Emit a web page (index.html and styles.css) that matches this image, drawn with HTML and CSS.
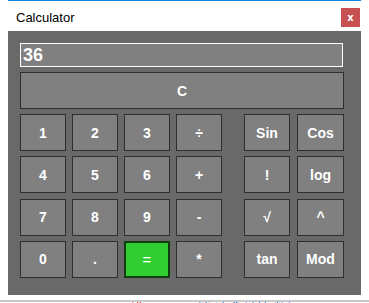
FILE: index.html
```html
<!DOCTYPE html>
<html lang="en">
<head>
    <meta charset="UTF-8">
    <meta name="viewport" content="width=device-width, initial-scale=1.0">
    <title>Calculator</title>
    <link rel="stylesheet" href="styles.css">
</head>
<body>
    <div class="window">
        <div class="titlebar">
            <span class="title">Calculator</span>
            <button class="close">x</button>
        </div>

        <div class="panel">
            <input type="text" class="display" value="36">
            <button class="key clear">C</button>

            <div class="keys">
                <!-- цифры и операции -->
                <div class="pad basic">
                    <button class="key">1</button>
                    <button class="key">2</button>
                    <button class="key">3</button>
                    <button class="key">÷</button>
                    <button class="key">4</button>
                    <button class="key">5</button>
                    <button class="key">6</button>
                    <button class="key">+</button>
                    <button class="key">7</button>
                    <button class="key">8</button>
                    <button class="key">9</button>
                    <button class="key">-</button>
                    <button class="key">0</button>
                    <button class="key">.</button>
                    <button class="key equals">=</button>
                    <button class="key">*</button>
                </div>

                <!-- функции -->
                <div class="pad sci">
                    <button class="key">Sin</button>
                    <button class="key">Cos</button>
                    <button class="key">!</button>
                    <button class="key">log</button>
                    <button class="key">√</button>
                    <button class="key">^</button>
                    <button class="key">tan</button>
                    <button class="key">Mod</button>
                </div>
            </div>
        </div>
    </div>

    <div class="behind">
        <span class="date">2019-01-08</span>
        <span class="err">错误</span>
        <span class="links">已取消 请求 链接 数据</span>
    </div>
</body>
</html>
```

FILE: styles.css
```css
body {
    margin: 0;
    font-family: "Liberation Sans", Arial, sans-serif;
    background-color: #fff;
    overflow: hidden;
}

.window {
    margin-left: 8px;
    width: 353px;
    border-top: 1px solid #1883d7;
}

.titlebar {
    height: 30px;
    display: flex;
    justify-content: space-between;
    align-items: flex-start;
    padding: 7px 1px 0 8px;
    box-sizing: border-box;
}

.title {
    font-size: 13px;
    color: #000;
    margin-top: 2px;
}

.close {
    width: 19px;
    height: 19px;
    border: none;
    padding: 0;
    background-color: #c75050;
    color: #fff;
    font-family: "DejaVu Sans", sans-serif;
    font-weight: bold;
    font-size: 10px;
}

.panel {
    background-color: #696969;
    padding: 12px 17px 17px 12px;
    display: flex;
    flex-direction: column;
    gap: 5px;
}

.display {
    box-sizing: border-box;
    width: 323px;
    height: 24px;
    margin: 0;
    padding: 0 2px;
    border: 1px solid #fff;
    background-color: #808080;
    color: #fff;
    font-family: "Liberation Sans", Arial, sans-serif;
    font-weight: bold;
    font-size: 18px;
    outline: none;
}

.key {
    box-sizing: border-box;
    margin: 0;
    padding: 0;
    background-color: #808080;
    border: 1px solid #2e2e2e;
    color: #fff;
    font-family: "Liberation Sans", Arial, sans-serif;
    font-weight: bold;
    font-size: 14px;
}

.clear {
    width: 324px;
    height: 37px;
}

.keys {
    display: flex;
    gap: 22px;
}

.pad {
    display: grid;
    grid-template-rows: repeat(4, 37px);
    row-gap: 5.33px;
}

.basic {
    grid-template-columns: repeat(4, 46px);
    column-gap: 6px;
}

.sci {
    grid-template-columns: 46px 47px;
    column-gap: 7px;
}

.equals {
    background-color: #32cd32;
    border: 2px solid #123d12;
    font-weight: normal;
    font-size: 15px;
}

.behind {
    margin-top: 5px;
    border-top: 2px solid #c8c8c8;
    padding-left: 20px;
    font-size: 13px;
    line-height: 13px;
    white-space: nowrap;
    font-family: "Liberation Sans", "Noto Sans CJK SC", sans-serif;
}

.date {
    color: #1f6f8b;
}

.err {
    color: #e00000;
    margin-left: 40px;
}

.links {
    color: #2a5db0;
    margin-left: 12px;
}
```
